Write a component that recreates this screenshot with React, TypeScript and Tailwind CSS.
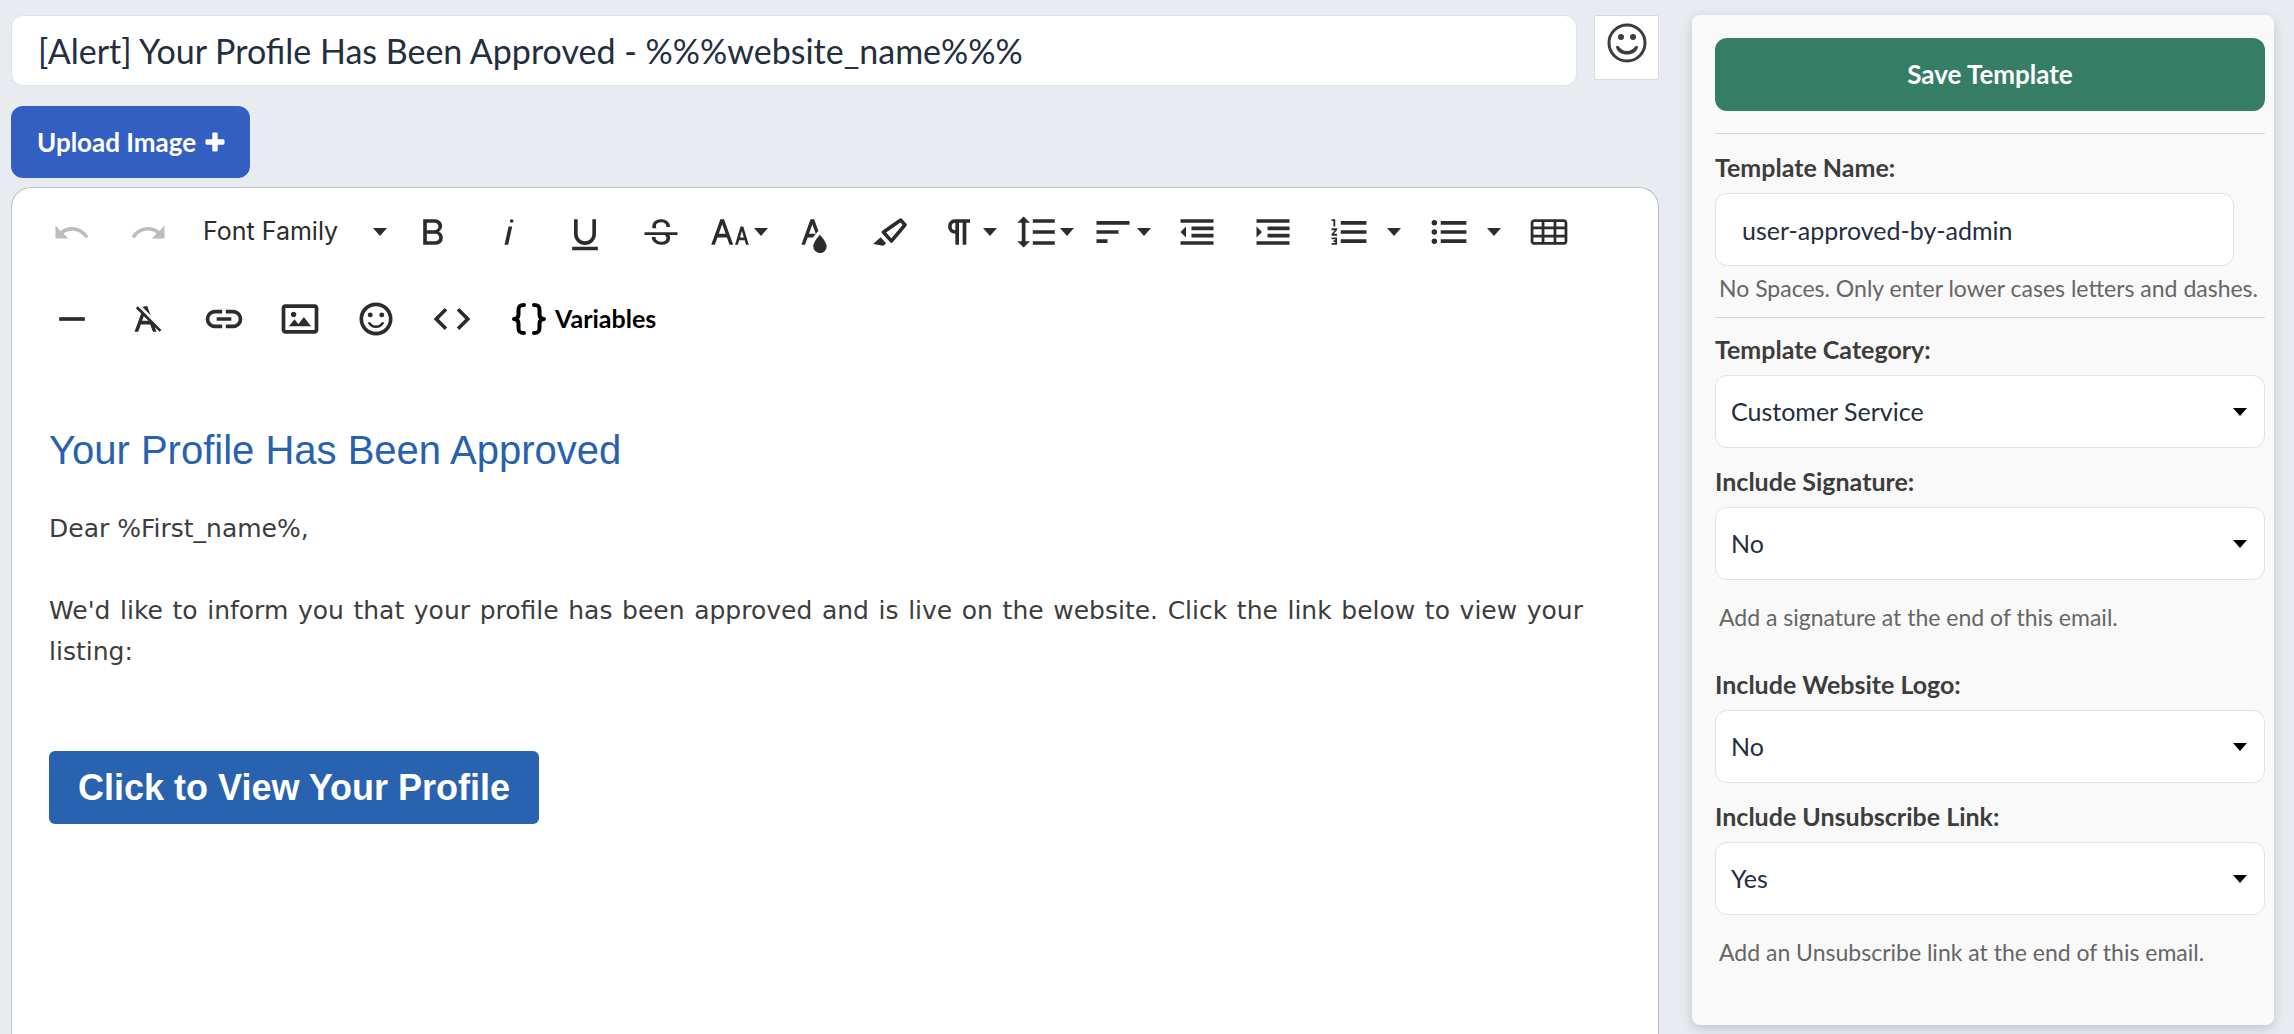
import { useState } from 'react'
import type { ReactNode } from 'react'

const UNDO = 'M10.4,9.4c-1.7,0.3-3.2,0.9-4.6,2L3,8.5v7h7l-2.7-2.7c3.7-2.6,8.8-1.8,11.5,1.9c0.2,0.2,0.3,0.4,0.5,0.7l1.7-0.8C18.8,10.8,14.6,8.8,10.4,9.4z'
const REDO = 'M13.6,9.4c1.7,0.3,3.2,0.9,4.6,2L21,8.5v7h-7l2.7-2.7C13,10.1,7.9,11,5.3,14.7c-0.2,0.2-0.3,0.4-0.5,0.7L3,14.5C5.1,10.8,9.3,8.7,13.6,9.4z'
const BOLD = 'M15.25,11.8h0A3.68,3.68,0,0,0,17,9a3.93,3.93,0,0,0-3.86-4H6.65V19h7a3.74,3.74,0,0,0,3.7-3.78V15.1A3.64,3.64,0,0,0,15.25,11.8ZM8.65,7h4.2a2.09,2.09,0,0,1,2,1.3,2.09,2.09,0,0,1-1.37,2.61,2.23,2.23,0,0,1-.63.09H8.65Zm4.6,10H8.65V13h4.6a2.09,2.09,0,0,1,2,1.3,2.09,2.09,0,0,1-1.37,2.61A2.23,2.23,0,0,1,13.25,17Z'
const ITALIC = 'M11.76,9h2l-2.2,10h-2Zm1.68-4a1,1,0,1,0,1,1,1,1,0,0,0-1-1Z'
const UNDERLINE = 'M19,20v2H5V20ZM16,13.1a4,4,0,0,1-8,0V5H6v8.1a6,6,0,0,0,12,0V5H16Z'
const STRIKE = 'M3,12.2H21v1.5H16.63a3.6,3.6,0,0,1,.35,1.59,3.25,3.25,0,0,1-1.31,2.7A5.55,5.55,0,0,1,12.2,19a6.44,6.44,0,0,1-2.62-.54,4.46,4.46,0,0,1-1.89-1.49,3.67,3.67,0,0,1-.67-2.15V14.7H9.02v.11a2.18,2.18,0,0,0,.85,1.83,3.69,3.69,0,0,0,2.33.68,3.39,3.39,0,0,0,2.08-.55,1.73,1.73,0,0,0,.7-1.47,1.7,1.7,0,0,0-.65-1.43,3,3,0,0,0-.27-.17H3ZM16.34,7.06A4.18,4.18,0,0,0,14.62,5.55,5.63,5.63,0,0,0,12.11,5,5.16,5.16,0,0,0,8.56,6.07,3.36,3.36,0,0,0,7.21,8.79a3.2,3.2,0,0,0,.2,1.1H9.5a1.6,1.6,0,0,1-.29-1.02,1.86,1.86,0,0,1,.76-1.58,3.5,3.5,0,0,1,2.14-.58,2.93,2.93,0,0,1,2.11.69,2.2,2.2,0,0,1,.72,1.9h2A4.1,4.1,0,0,0,16.34,7.06Z'
const FONT_SIZE = 'M20.75,19h1.5l-3-10h-1.5l-3,10h1.5L17,16.5h3Zm-3.3-4,1.05-3.5L19.55,15Zm-5.7,4h2l-5-14h-2l-5,14h2l1.43-4h5.14ZM5.89,13,7.75,7.8,9.61,13Z'
const TEXT_COLOR = 'M15.2,13.494s-3.6,3.9-3.6,6.3a3.65,3.65,0,0,0,7.3.1v-.1C18.9,17.394,15.2,13.494,15.2,13.494Zm-1.47-1.357.669-.724L12.1,5h-2l-5,14h2l1.43-4h2.943A24.426,24.426,0,0,1,13.726,12.137ZM11.1,7.8l1.86,5.2H9.244Z'
const HIGHLIGHT = 'M9.918,12.241l7.748-5.39,1.179,1.296-6.094,7.207L9.918,12.241M7.587,12.652l4.536,4.983a.934.934,0,0,0,1.395-.091L20.969,8.731A.908.908,0,0,0,20.991,7.533l-2.513-2.761a.908.908,0,0,0-1.195-.091L7.809,11.271A.934.934,0,0,0,7.587,12.652ZM2.794,18.528,8.411,19.5l1.479-1.346-3.029-3.328Z'
const PARAGRAPH = 'M10.15,5A4.11,4.11,0,0,0,6.08,8.18,4,4,0,0,0,10,13v6h2V7h2V19h2V7h2V5ZM8,9a2,2,0,0,1,2-2v4A2,2,0,0,1,8,9Z'
const LINE_HEIGHT = 'M6.25,7h2.5L5.25,3.5,1.75,7h2.5V17H1.75l3.5,3.5L8.75,17H6.25Zm4-2V7h12V5Zm0,14h12V17h-12Zm0-6h12V11h-12Z'
const ALIGN = 'M3,18h6v-2H3v2zM3,6v2h18V6H3zM3,13h12v-2H3v2z'
const OUTDENT = 'M3,12l3,3V9L3,12z M3,19h18v-2H3V19z M3,7h18V5H3V7z M9,11h12V9H9V11z M9,15h12v-2H9V15z'
const INDENT = 'M3,9v6l3-3L3,9z M3,19h18v-2H3V19z M3,7h18V5H3V7z M9,11h12V9H9V11z M9,15h12v-2H9V15z'
const ORDERED = 'M2.5,16h2v.5h-1v1h1V18h-2v1h3V15h-3Zm1-7h1V5h-2V6h1Zm-1,2H4.3L2.5,13.1V14h3V13H3.7l1.8-2.1V10h-3Zm5-5V8h14V6Zm0,12h14V16H7.5Zm0-5h14V11H7.5Z'
const UNORDERED = 'M4,10.5a1.5,1.5,0,1,0,0,3a1.5,1.5,0,1,0,0-3ZM4,5.5a1.5,1.5,0,1,0,0,3a1.5,1.5,0,1,0,0-3ZM4,15.5a1.5,1.5,0,1,0,0,3a1.5,1.5,0,1,0,0-3ZM7.5,6V8h14V6Zm0,12h14V16H7.5Zm0-5h14V11H7.5Z'
const TABLE = 'M20,5H4C2.9,5,2,5.9,2,7v10c0,1.1,0.9,2,2,2h16c1.1,0,2-0.9,2-2V7C22,5.9,21.1,5,20,5z M9.5,13.5v-3h5v3H9.5z M14.5,15v2.5h-5V15H14.5z M9.5,9V6.5h5V9H9.5z M3.5,7c0-0.3,0.2-0.5,0.5-0.5h4V9H3.5V7z M3.5,10.5H8v3H3.5V10.5z M3.5,17v-2H8v2.5H4C3.7,17.5,3.5,17.3,3.5,17z M20.5,17c0,0.3-0.2,0.5-0.5,0.5h-4V15h4.5V17z M20.5,13.5H16v-3h4.5V13.5z M20.5,9H16V6.5h4c0.3,0,0.5,0.2,0.5,0.5V9z'
const RULE = 'M5,11h14v2H5z'
const CLEAR = 'M11.48,10.09l-1.2-1.21L8.8,7.41,6.43,5,5.37,6.1,8.25,9,4.66,19h2l1.43-4h5.14l1.43,4h2l-.89-2.51L18.27,19l1.07-1.06L14.59,13.2ZM8.8,13l.92-2.56L12.27,13Zm.56-7.15L9.66,5h2l1.75,4.9Z'
const LINK = 'M11,17H7A5,5,0,0,1,7,7h4V9H7a3,3,0,0,0,0,6h4ZM17,7H13V9h4a3,3,0,0,1,0,6H13v2h4A5,5,0,0,0,17,7Zm-1,4H8v2h8Z'
const IMAGE = 'M14.2,11l3.8,5H6l3-3.9l2.1,2.7L14,11H14.2z M8.5,11c0.8,0,1.5-0.7,1.5-1.5S9.3,8,8.5,8S7,8.7,7,9.5C7,10.3,7.7,11,8.5,11z M22,6v12c0,1.1-0.9,2-2,2H4c-1.1,0-2-0.9-2-2V6c0-1.1,0.9-2,2-2h16C21.1,4,22,4.9,22,6z M20,8.8V6H4v12h16V8.8z'
const EMOTICON = 'M11.991,3A9,9,0,1,0,21,12,8.996,8.996,0,0,0,11.991,3ZM12,19a7,7,0,1,1,7-7A6.998,6.998,0,0,1,12,19Zm3.105-5.2h1.504a4.948,4.948,0,0,1-9.217,0H8.895a3.578,3.578,0,0,0,6.209,0ZM7.5,9.75A1.35,1.35,0,1,1,8.85,11.1,1.35,1.35,0,0,1,7.5,9.75Zm6.3,0a1.35,1.35,0,1,1,1.35,1.35A1.35,1.35,0,0,1,13.8,9.75Z'
const CODE = 'M9.4,16.6,4.8,12,9.4,7.4,8,6,2,12l6,6Zm5.2,0L19.2,12,14.6,7.4,16,6l6,6-6,6Z'

function Icon({ d }: { d: string }) {
  return (
    <svg viewBox="0 0 24 24" className="size-11 shrink-0" fill="currentColor" aria-hidden="true">
      <path d={d} />
    </svg>
  )
}

function Caret() {
  return (
    <svg viewBox="0 0 14 8" className="h-2 w-3.5 shrink-0" fill="currentColor" aria-hidden="true">
      <path d="M0 0h14L7 8z" />
    </svg>
  )
}

function Tool({ label, d, disabled }: { label: string; d: string; disabled?: boolean }) {
  return (
    <button
      type="button"
      aria-label={label}
      disabled={disabled}
      className="flex size-[76px] items-center justify-center disabled:text-[#bdbdbd]"
    >
      <Icon d={d} />
    </button>
  )
}

function DropTool({ label, d }: { label: string; d: string }) {
  return (
    <button type="button" aria-label={label} className="flex h-[76px] w-[77px] items-center justify-between pr-2 pl-[9px]">
      <Icon d={d} />
      <Caret />
    </button>
  )
}

function ListTool({ label, d }: { label: string; d: string }) {
  return (
    <div className="flex">
      <Tool label={label} d={d} />
      <button type="button" aria-label={`${label} options`} className="flex h-[76px] w-6 items-center">
        <Caret />
      </button>
    </div>
  )
}

function Toolbar() {
  return (
    <div role="toolbar" aria-label="Formatting" className="flex flex-wrap gap-y-[11px] pt-1.5 pl-[22px] text-[#2c2c2c]">
      <Tool label="Undo" d={UNDO} disabled />
      <Tool label="Redo" d={REDO} disabled />
      <button type="button" className="flex h-[76px] w-[209px] items-center justify-between pr-2 pl-[17px] font-[Inter,sans-serif] text-[25px]">
        Font Family
        <Caret />
      </button>
      <Tool label="Bold" d={BOLD} />
      <Tool label="Italic" d={ITALIC} />
      <Tool label="Underline" d={UNDERLINE} />
      <Tool label="Strikethrough" d={STRIKE} />
      <DropTool label="Font Size" d={FONT_SIZE} />
      <Tool label="Text Color" d={TEXT_COLOR} />
      <Tool label="Background Color" d={HIGHLIGHT} />
      <DropTool label="Paragraph Format" d={PARAGRAPH} />
      <DropTool label="Line Height" d={LINE_HEIGHT} />
      <DropTool label="Align" d={ALIGN} />
      <Tool label="Decrease Indent" d={OUTDENT} />
      <Tool label="Increase Indent" d={INDENT} />
      <ListTool label="Ordered List" d={ORDERED} />
      <ListTool label="Unordered List" d={UNORDERED} />
      <Tool label="Insert Table" d={TABLE} />
      <Tool label="Insert Horizontal Line" d={RULE} />
      <Tool label="Clear Formatting" d={CLEAR} />
      <Tool label="Insert Link" d={LINK} />
      <Tool label="Insert Image" d={IMAGE} />
      <Tool label="Emoticons" d={EMOTICON} />
      <Tool label="Code View" d={CODE} />
      <button type="button" className="flex h-[76px] items-center gap-2 px-[21px] font-[Lato,sans-serif] text-[25px] font-bold text-black">
        <svg viewBox="0 0 36 34" className="h-[34px] w-9" fill="none" stroke="currentColor" strokeWidth="4" strokeLinecap="round" strokeLinejoin="round" aria-hidden="true">
          <path d="M13 3C8.500 3 7.500 4.500 7.500 8v4C7.500 15 6 17 3 17c3 0 4.500 2 4.500 5v4c0 3.500 1 5 5.500 5" />
          <path d="M23 3c4.500 0 5.500 1.500 5.500 5v4c0 3 1.500 5 4.500 5-3 0-4.500 2-4.500 5v4c0 3.500-1 5-5.500 5" />
        </svg>
        Variables
      </button>
    </div>
  )
}

function Field({ id, label, children }: { id: string; label: string; children: ReactNode }) {
  return (
    <div className="flex flex-col gap-2.5">
      <label htmlFor={id} className="text-[25px] leading-8 font-bold text-[#3d3d3d]">
        {label}
      </label>
      {children}
    </div>
  )
}

function SelectField({ id, label, options, initial }: { id: string; label: string; options: string[]; initial: string }) {
  const [value, setValue] = useState(initial)

  return (
    <Field id={id} label={label}>
      <div className="relative text-black">
        <select
          id={id}
          value={value}
          onChange={(e) => setValue(e.target.value)}
          className="h-[73px] w-full appearance-none rounded-xl border border-[#e2e2e2] bg-white px-[15px] text-[25px] text-[#232e40]"
        >
          {options.map((option) => (
            <option key={option}>{option}</option>
          ))}
        </select>
        <span className="pointer-events-none absolute inset-y-0 right-[18px] flex items-center">
          <Caret />
        </span>
      </div>
    </Field>
  )
}

function Sidebar() {
  const [name, setName] = useState('user-approved-by-admin')

  return (
    <aside className="w-[582px] shrink-0 self-start rounded-lg bg-[#f9f9f9] pt-[23px] pr-[9px] pb-[57px] pl-[23px] shadow-[0_4px_12px_rgba(0,0,0,0.16)]">
      <button type="button" className="h-[73px] w-full rounded-xl bg-[#367d66] text-[26px] font-bold text-white">
        Save Template
      </button>
      <hr className="mt-[22px] mb-[17px] border-[#d6d6d6]" />
      <Field id="template-name" label="Template Name:">
        <input
          id="template-name"
          value={name}
          onChange={(e) => setName(e.target.value)}
          className="mr-[31px] h-[73px] rounded-xl border border-[#e2e2e2] bg-white px-[26px] text-[25px] text-[#232e40]"
        />
      </Field>
      <p className="mt-1.5 pl-1 text-[23px] leading-8 whitespace-nowrap text-[#666]">No Spaces. Only enter lower cases letters and dashes.</p>
      <hr className="mt-[13px] mb-[15px] border-[#d6d6d6]" />
      <div className="flex flex-col gap-[17px]">
        <SelectField id="category" label="Template Category:" options={['Customer Service', 'Marketing', 'Billing']} initial="Customer Service" />
        <SelectField id="signature" label="Include Signature:" options={['No', 'Yes']} initial="No" />
      </div>
      <p className="mt-[21px] mb-[35px] pl-1 text-[23px] leading-8 text-[#666]">Add a signature at the end of this email.</p>
      <div className="flex flex-col gap-[17px]">
        <SelectField id="logo" label="Include Website Logo:" options={['No', 'Yes']} initial="No" />
        <SelectField id="unsubscribe" label="Include Unsubscribe Link:" options={['No', 'Yes']} initial="Yes" />
      </div>
      <p className="mt-[21px] pl-1 text-[23px] leading-8 text-[#666]">Add an Unsubscribe link at the end of this email.</p>
    </aside>
  )
}

function App() {
  const [subject, setSubject] = useState('[Alert] Your Profile Has Been Approved - %%%website_name%%%')

  return (
    <div className="flex min-h-screen gap-[33px] bg-[#e8ebf0] pt-[15px] pr-5 pl-[11px] font-[Lato,sans-serif]">
      <main className="flex min-w-0 flex-1 flex-col">
        <div className="flex items-start gap-[17px]">
          <input
            aria-label="Subject"
            value={subject}
            onChange={(e) => setSubject(e.target.value)}
            className="h-[71px] min-w-0 flex-1 rounded-xl border border-[#dfe2e5] bg-white px-[26px] text-[34px] text-[#232e40]"
          />
          <button type="button" aria-label="Insert emoji" className="flex size-[65px] justify-center rounded-xs border border-[#d8dade] bg-white pt-[7px] text-[#3d3d3d]">
            <svg viewBox="0 0 40 40" className="size-10" fill="currentColor" aria-hidden="true">
              <circle cx="20" cy="20" r="18" fill="none" stroke="currentColor" strokeWidth="3" />
              <circle cx="14" cy="14" r="3" />
              <circle cx="26" cy="14" r="3" />
              <path d="M9 24.500a1.500 1.500 0 0 1 2.600-1.200C14 26.500 16.500 28 20 28s6-1.500 8.400-4.700A1.500 1.500 0 0 1 31 24.500C29.500 29 25.500 31.500 20 31.500S10.500 29 9 24.500z" />
            </svg>
          </button>
        </div>

        <button type="button" className="mt-5 flex h-[72px] items-center gap-[9px] self-start rounded-xl bg-[#335fc3] pr-[25px] pl-[26px] text-[26px] font-bold text-white">
          Upload Image
          <svg viewBox="0 0 20 20" className="size-5" fill="currentColor" aria-hidden="true">
            <path d="M8.500.5h3a1.200 1.200 0 0 1 1.200 1.200v5.600h5.600a1.200 1.200 0 0 1 1.200 1.200v3a1.200 1.200 0 0 1-1.200 1.200h-5.600v5.600a1.200 1.200 0 0 1-1.200 1.200h-3a1.200 1.200 0 0 1-1.200-1.200v-5.600H1.700A1.200 1.200 0 0 1 .5 11.500v-3a1.200 1.200 0 0 1 1.200-1.200h5.600V1.700A1.200 1.200 0 0 1 8.500.5z" />
          </svg>
        </button>

        <section className="mt-[9px] flex-1 rounded-t-[20px] border border-b-0 border-[#bfc0c4] bg-white">
          <Toolbar />
          <div className="pt-[68px] pr-[75px] pb-10 pl-[37px] text-[25px] leading-[41px] text-[#3d3d3d] [font-family:'DejaVu_Sans',sans-serif]">
            <h2 className="mb-[33px] text-[40px] leading-[50px] text-[#2862ae] [font-family:'Liberation_Sans',sans-serif]">
              Your Profile Has Been Approved
            </h2>
            <p className="mb-[41px]">Dear %First_name%,</p>
            <p className="mb-[79px] text-justify">
              We'd like to inform you that your profile has been approved and is live on the website. Click the link below to view your listing:
            </p>
            <a
              href="#profile"
              className="inline-flex h-[73px] items-center rounded-md bg-[#2962ae] px-[29px] text-4xl font-bold text-white [font-family:'Liberation_Sans',sans-serif]"
            >
              Click to View Your Profile
            </a>
          </div>
        </section>
      </main>

      <Sidebar />
    </div>
  )
}

export default App
